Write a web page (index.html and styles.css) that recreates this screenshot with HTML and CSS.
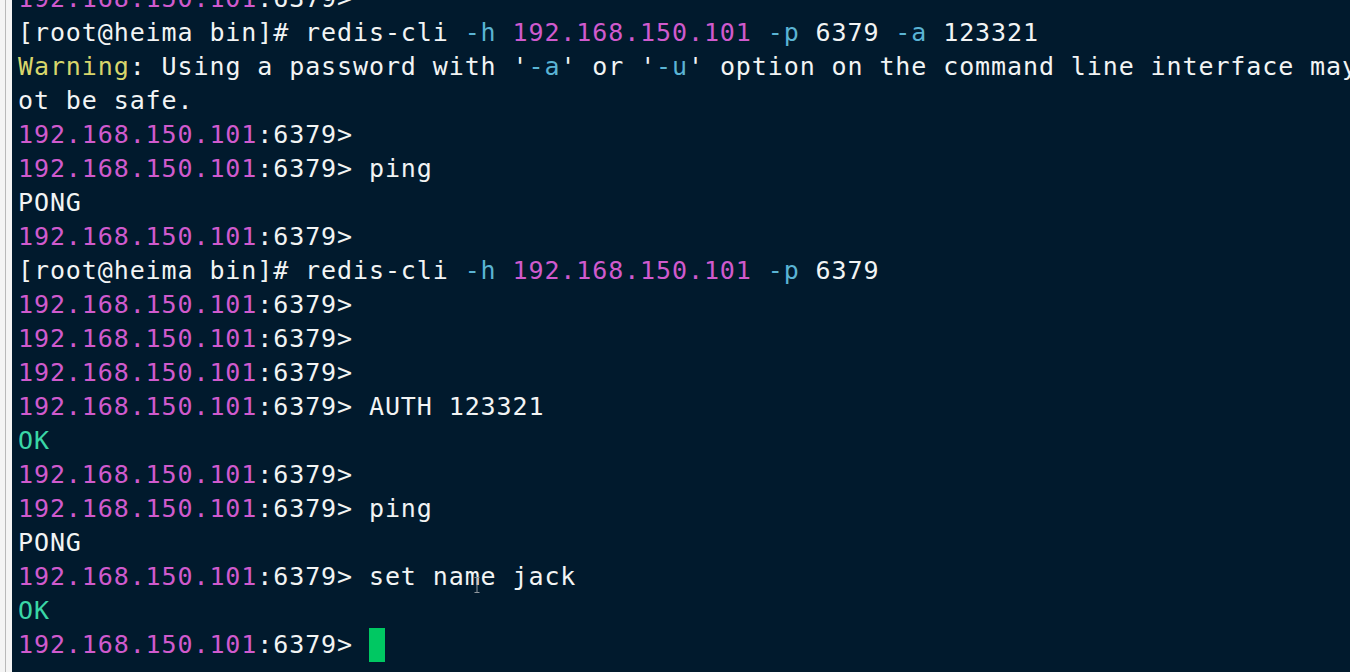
FILE: index.html
```html
<!DOCTYPE html>
<html>
<head>
<meta charset="utf-8">
<link rel="stylesheet" href="styles.css">
</head>
<body>
<div class="app">
  <div class="gutter"><div class="gutter-line"></div></div>
  <div class="term">
    <div class="lines">
      <div class="ln"><span class="ip">192.168.150.101</span>:6379&gt;</div>
      <div class="ln">[root@heima bin]# redis-cli <span class="opt">-h</span> <span class="ip">192.168.150.101</span> <span class="opt">-p</span> 6379 <span class="opt">-a</span> 123321</div>
      <div class="ln"><span class="warn">Warning</span>: Using a password with '<span class="opt">-a</span>' or '<span class="opt">-u</span>' option on the command line interface may n</div>
      <div class="ln">ot be safe.</div>
      <div class="ln"><span class="ip">192.168.150.101</span>:6379&gt;</div>
      <div class="ln"><span class="ip">192.168.150.101</span>:6379&gt; ping</div>
      <div class="ln">PONG</div>
      <div class="ln"><span class="ip">192.168.150.101</span>:6379&gt;</div>
      <div class="ln">[root@heima bin]# redis-cli <span class="opt">-h</span> <span class="ip">192.168.150.101</span> <span class="opt">-p</span> 6379</div>
      <div class="ln"><span class="ip">192.168.150.101</span>:6379&gt;</div>
      <div class="ln"><span class="ip">192.168.150.101</span>:6379&gt;</div>
      <div class="ln"><span class="ip">192.168.150.101</span>:6379&gt;</div>
      <div class="ln"><span class="ip">192.168.150.101</span>:6379&gt; AUTH 123321</div>
      <div class="ln ok">OK</div>
      <div class="ln"><span class="ip">192.168.150.101</span>:6379&gt;</div>
      <div class="ln"><span class="ip">192.168.150.101</span>:6379&gt; ping</div>
      <div class="ln">PONG</div>
      <div class="ln"><span class="ip">192.168.150.101</span>:6379&gt; set name jack</div>
      <div class="ln ok">OK</div>
      <div class="ln"><span class="ip">192.168.150.101</span>:6379&gt; <span class="cursor"> </span></div>
    </div>
    <svg class="ibeam" width="6" height="16" viewBox="0 0 6 16"><path d="M0.5 0.5H5.5M3 0.5V15.5M0.5 15.5H5.5" stroke="#8f979e" stroke-width="1" fill="none"/></svg>
  </div>
</div>
</body>
</html>
```
FILE: styles.css
```css
html, body {
  margin: 0;
  padding: 0;
  width: 1350px;
  height: 672px;
  overflow: hidden;
  background: #011a2d;
}
.app {
  display: flex;
  width: 1350px;
  height: 672px;
}
.gutter {
  width: 12px;
  flex: none;
  background: #f4f4f4;
  display: flex;
  justify-content: flex-start;
}
.gutter-line {
  margin-left: 5px;
  width: 1px;
  background: #b9b9b9;
}
.term {
  position: relative;
  flex: 1;
  overflow: hidden;
  background: #011a2d;
  padding-left: 6px;
}
.lines {
  margin-top: -18px;
  font-family: "DejaVu Sans Mono", monospace;
  font-size: 25px;
  letter-spacing: 0.9px;
  line-height: 34px;
  color: #f2f4f4;
}
.ln {
  height: 34px;
  white-space: pre;
}
.ip { color: #d05acd; }
.opt { color: #5ab4d4; }
.warn { color: #d8d66b; }
.ok { color: #3ad6a6; }
.cursor {
  display: inline-block;
  width: 16px;
  height: 34px;
  vertical-align: top;
  background: #00c862;
}
.ibeam {
  position: absolute;
  left: 462px;
  top: 577px;
}
```
